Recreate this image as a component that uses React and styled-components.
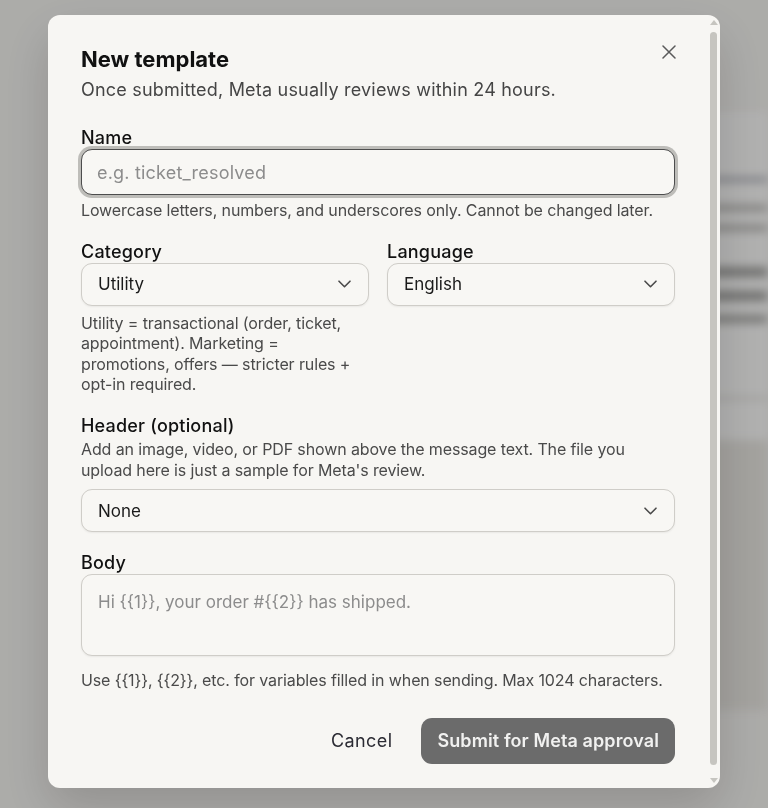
import React from "react";
import styled, { createGlobalStyle } from "styled-components";

const GlobalStyle = createGlobalStyle`
  html, body {
    margin: 0;
    padding: 0;
    height: 100%;
  }
  body {
    font-family: Inter, "Noto Sans", "Liberation Sans", sans-serif;
    background: #f7f6f3;
    color: #111;
    overflow: hidden;
  }
  * { box-sizing: border-box; }
`;

/* ---------- page behind the dialog ---------- */

const Page = styled.div`
  height: 100vh;
  overflow: hidden;
  padding: 112px 0 0 560px;
  filter: blur(5px);
  display: flex;
  flex-direction: column;
`;

const SidePanel = styled.aside`
  height: 328px;
  width: 208px;
  background: #fefefd;
  padding: 66px 0 0 150px;
  display: flex;
  flex-direction: column;
  gap: 14px;
`;

const SideFooter = styled.div`
  height: 270px;
  width: 208px;
  background: #ebe9e4;
`;

const PageLine = styled.div`
  height: ${(p) => p.$h || 8}px;
  width: ${(p) => p.$w}px;
  border-radius: 4px;
  background: ${(p) => p.$c || "#8a8986"};
  margin-top: ${(p) => p.$mt || 0}px;
`;

const Overlay = styled.div`
  position: fixed;
  inset: 0;
  background: rgba(0, 0, 0, 0.3);
  display: flex;
  justify-content: center;
  align-items: flex-start;
`;

/* ---------- dialog ---------- */

const thumbColor = "#c6c5c0";

const Dialog = styled.div`
  width: 672px;
  height: 773px;
  margin-top: 15px;
  background: #f7f6f3;
  border-radius: 12px;
  overflow: hidden;
  display: flex;
  box-shadow: 0 20px 50px rgba(0, 0, 0, 0.16);
`;

const ScrollArea = styled.div`
  flex: 1;
  min-width: 0;
  overflow-y: auto;
  scrollbar-width: none;
  &::-webkit-scrollbar { display: none; }
`;

/* vertical scrollbar rail beside the scroll area */
const Rail = styled.div`
  width: 15px;
  flex: none;
  display: flex;
  flex-direction: column;
  align-items: center;
`;

const RailArrow = styled.div`
  height: 15px;
  flex: none;
  display: flex;
  align-items: center;
  justify-content: center;
  padding-left: 2px;
`;

const Thumb = styled.div`
  flex: 1;
  width: 7px;
  margin: 2px 0 8px 2px;
  border-radius: 4px;
  background: ${thumbColor};
`;

const Body = styled.div`
  position: relative;
  padding: 30px 30px 40px 33px;
  display: flex;
  flex-direction: column;
`;

const CloseButton = styled.button`
  position: absolute;
  top: 24px;
  right: 23px;
  width: 26px;
  height: 26px;
  border: none;
  background: transparent;
  padding: 0;
  display: flex;
  align-items: center;
  justify-content: center;
  cursor: pointer;
  color: #5a5a5a;
`;

const Title = styled.h2`
  margin: 0;
  font-size: 22px;
  line-height: 28px;
  font-weight: 700;
  color: #111;
`;

const Subtitle = styled.p`
  margin: 5px 0 0;
  font-size: 18px;
  line-height: 24px;
  letter-spacing: 0.2px;
  color: #454545;
`;

const Fields = styled.div`
  margin-top: 25px;
  display: flex;
  flex-direction: column;
  gap: 20px;
`;

const Field = styled.div`
  display: flex;
  flex-direction: column;
  min-width: 0;
`;

const Row = styled.div`
  display: grid;
  grid-template-columns: 1fr 1fr;
  gap: 18px;
`;

const Label = styled.label`
  font-size: 18px;
  line-height: 22px;
  letter-spacing: 0.2px;
  font-weight: 500;
  color: #111;
`;

const Help = styled.p`
  margin: ${(p) => p.$mt ?? 5}px 0 0;
  font-size: 16px;
  line-height: 20.6px;
  letter-spacing: -0.12px;
  color: #4a4a4a;
`;

const controlBase = `
  width: 100%;
  font-family: inherit;
  font-size: 17px;
  color: #1a1a1a;
  background: #f8f7f4;
  border: 1px solid #cfcdc8;
  border-radius: 11px;
  box-shadow: 0 1px 2px rgba(0, 0, 0, 0.06);
  outline: none;
  &::placeholder { color: #8c8c8c; }
`;

const TextInput = styled.input`
  ${controlBase}
  height: 46px;
  padding: 0 15px;
  font-size: 18px;
  letter-spacing: 0.2px;
  border-color: ${(p) => (p.$active ? "#4d4d4d" : "#cfcdc8")};
  box-shadow: ${(p) =>
    p.$active ? "0 0 0 3px rgba(120, 119, 115, 0.45)" : "0 1px 2px rgba(0,0,0,0.06)"};
`;

const SelectWrap = styled.div`
  position: relative;
  margin-top: ${(p) => p.$mt || 0}px;
`;

const Select = styled.select`
  ${controlBase}
  appearance: none;
  height: 43px;
  padding: 0 40px 0 16px;
  cursor: pointer;
`;

const Chevron = styled.svg`
  position: absolute;
  right: 18px;
  top: 50%;
  transform: translateY(-50%);
  pointer-events: none;
`;

const TextArea = styled.textarea`
  ${controlBase}
  display: block;
  height: 82px;
  padding: 15px 16px;
  line-height: 24px;
  resize: none;
`;

const Actions = styled.div`
  margin-top: 27px;
  display: flex;
  justify-content: flex-end;
  align-items: center;
  gap: 13px;
`;

const Button = styled.button`
  font-family: inherit;
  font-size: 18px;
  height: 46px;
  padding: 0 16px;
  border-radius: 11px;
  border: none;
  cursor: pointer;
  letter-spacing: ${(p) => (p.$primary ? 0.1 : 0.4)}px;
  font-weight: ${(p) => (p.$primary ? 600 : 400)};
  background: ${(p) => (p.$primary ? "#6b6b6b" : "transparent")};
  color: ${(p) => (p.$primary ? "#f1f1f0" : "#2b2b33")};
`;

function ChevronIcon() {
  return (
    <Chevron width="13" height="8" viewBox="0 0 13 8" fill="none">
      <path d="M1 1.2l5.5 5.5L12 1.2" stroke="#4a4a4a" strokeWidth="1.6" strokeLinecap="round" strokeLinejoin="round" />
    </Chevron>
  );
}

function SelectField({ value, options, mt }) {
  return (
    <SelectWrap $mt={mt}>
      <Select defaultValue={value}>
        {options.map((o) => (
          <option key={o}>{o}</option>
        ))}
      </Select>
      <ChevronIcon />
    </SelectWrap>
  );
}

function ScrollRail() {
  return (
    <Rail aria-hidden="true">
      <RailArrow>
        <svg width="8" height="5" viewBox="0 0 8 5">
          <path d="M4 0L8 5H0z" fill={thumbColor} />
        </svg>
      </RailArrow>
      <Thumb />
      <RailArrow>
        <svg width="8" height="5" viewBox="0 0 8 5">
          <path d="M0 0h8L4 5z" fill={thumbColor} />
        </svg>
      </RailArrow>
    </Rail>
  );
}

export default function App() {
  return (
    <>
      <GlobalStyle />
      <Page>
        <SidePanel>
          <PageLine $w={58} $h={3} $c="#7d8190" />
          <PageLine $w={58} $h={6} $mt={10} $c="#b4b3b0" />
          <PageLine $w={58} $h={6} $c="#b4b3b0" />
          <PageLine $w={58} $h={10} $mt={22} $c="#a3a3a1" />
          <PageLine $w={58} $h={10} $c="#a3a3a1" />
          <PageLine $w={58} $h={8} $c="#aaaaa8" />
          <PageLine $w={58} $h={3} $mt={60} $c="#dcdbd7" />
        </SidePanel>
        <SideFooter />
      </Page>
      <Overlay>
        <Dialog role="dialog" aria-modal="true">
          <ScrollArea>
            <Body>
              <CloseButton aria-label="Close">
                <svg width="14" height="14" viewBox="0 0 14 14" fill="none">
                  <path d="M1 1l12 12M13 1L1 13" stroke="currentColor" strokeWidth="1.5" strokeLinecap="round" />
                </svg>
              </CloseButton>
              <Title>New template</Title>
              <Subtitle>Once submitted, Meta usually reviews within 24 hours.</Subtitle>
              <Fields>
                <Field>
                  <Label>Name</Label>
                  <TextInput $active autoFocus placeholder="e.g. ticket_resolved" />
                  <Help>Lowercase letters, numbers, and underscores only. Cannot be changed later.</Help>
                </Field>
                <Row>
                  <Field>
                    <Label>Category</Label>
                    <SelectField value="Utility" options={["Utility", "Marketing"]} />
                    <Help $mt={7}>
                      Utility = transactional (order, ticket, appointment). Marketing = promotions,
                      offers — stricter rules + opt-in required.
                    </Help>
                  </Field>
                  <Field>
                    <Label>Language</Label>
                    <SelectField value="English" options={["English", "Spanish", "Portuguese"]} />
                  </Field>
                </Row>
                <Field>
                  <Label>Header (optional)</Label>
                  <Help $mt={2}>
                    Add an image, video, or PDF shown above the message text. The file you upload
                    here is just a sample for Meta's review.
                  </Help>
                  <SelectField mt={9} value="None" options={["None", "Image", "Video", "Document"]} />
                </Field>
                <Field>
                  <Label>Body</Label>
                  <TextArea placeholder="Hi {{1}}, your order #{{2}} has shipped." />
                  <Help $mt={14}>
                    Use {"{{1}}"}, {"{{2}}"}, etc. for variables filled in when sending. Max 1024
                    characters.
                  </Help>
                </Field>
              </Fields>
              <Actions>
                <Button>Cancel</Button>
                <Button $primary>Submit for Meta approval</Button>
              </Actions>
            </Body>
          </ScrollArea>
          <ScrollRail />
        </Dialog>
      </Overlay>
    </>
  );
}
